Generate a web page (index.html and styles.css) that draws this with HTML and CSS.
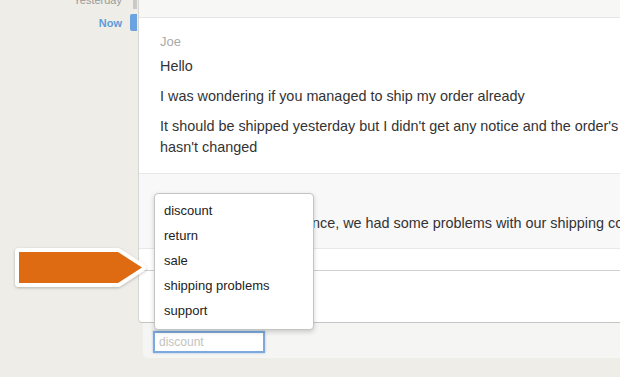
FILE: index.html
```
<!DOCTYPE html>
<html lang="en">
<head>
    <meta charset="UTF-8">
    <meta name="viewport" content="width=device-width, initial-scale=1.0">
    <title>Conversation</title>
    <link rel="stylesheet" href="styles.css">
</head>
<body>

    <div class="app">
        <div class="sidebar">
            <div class="day past">Yesterday</div>
            <div class="day current">Now</div>
        </div>
        <div class="tabs">
            <div class="tab past"></div>
            <div class="tab current"></div>
        </div>

        <div class="main">
            <div class="panel">
                <div class="topbar"></div>

                <div class="message">
                    <div class="author">Joe</div>
                    <p>Hello</p>
                    <p>I was wondering if you managed to ship my order already</p>
                    <p>It should be shipped yesterday but I didn't get any notice and the order's status hasn't changed</p>
                </div>

                <div class="message reply">
                    <div class="author">Anna</div>
                    <p>Sorry for the inconvenience, we had some problems with our shipping company</p>
                </div>

                <div class="strip"></div>
                <div class="compose"></div>
            </div>

            <div class="footer">
                <input class="tag-input" type="text" placeholder="discount">
            </div>
        </div>
    </div>

    <!-- suggestions for the tag field -->
    <ul class="suggestions">
        <li>discount</li>
        <li>return</li>
        <li>sale</li>
        <li>shipping problems</li>
        <li>support</li>
    </ul>

    <!-- callout arrow -->
    <svg class="pointer" width="150" height="56" viewBox="8 240 150 56">
        <defs>
            <filter id="shade" x="-10%" y="-20%" width="120%" height="150%">
                <feDropShadow dx="0" dy="1" stdDeviation="1.5" flood-color="#000" flood-opacity="0.25"/>
            </filter>
        </defs>
        <path d="M19 252 H118 L142 267.5 L118 283 H19 Z" fill="#fff" stroke="#fff" stroke-width="8" stroke-linejoin="round" filter="url(#shade)"/>
        <path d="M19 252 H118 L142 267.5 L118 283 H19 Z" fill="#de6a12"/>
    </svg>

</body>
</html>
```

FILE: styles.css
```
body {
    margin: 0;
    font-family: "Liberation Sans", Arial, sans-serif;
    background-color: #eeede8;
    overflow: hidden;
}

.app {
    display: flex;
    height: 377px;
    width: 740px;
}

.sidebar {
    flex-shrink: 0;
    width: 130px;
    padding-right: 8px;
    box-sizing: border-box;
    text-align: right;
    font-size: 11px;
    margin-top: -7px;
}

.day {
    height: 22px;
    line-height: 14px;
}

.day.past {
    color: #9a9a9a;
}

.day.current {
    color: #5f9bd9;
    font-weight: bold;
    margin-top: 1px;
}

.tabs {
    flex-shrink: 0;
    width: 8px;
    display: flex;
    flex-direction: column;
    align-items: flex-end;
}

.tab.past {
    width: 4px;
    height: 9px;
    background-color: #c9c9c7;
    margin-right: 1px;
}

.tab.current {
    width: 7px;
    height: 17px;
    margin-top: 5px;
    margin-right: 1px;
    background-color: #6ba3e0;
    border-radius: 2px 0 0 2px;
}

.main {
    flex: 1;
    display: flex;
    flex-direction: column;
    min-width: 0;
}

.panel {
    background-color: #fff;
    border-left: 1px solid #d6d6d4;
    border-bottom: 1px solid #c4c4c4;
    border-bottom-left-radius: 4px;
}

.topbar {
    height: 17px;
    background-color: #f7f7f6;
    border-bottom: 1px solid #e6e6e4;
}

.message {
    padding: 15px 60px 15px 21px;
    font-size: 14.4px;
    color: #333;
    border-bottom: 1px solid #e8e8e6;
}

.message.reply {
    background-color: #f8f8f8;
    padding-top: 16px;
    padding-bottom: 14px;
    white-space: nowrap;
    overflow: hidden;
}

.author {
    color: #aaa;
    font-size: 13px;
    line-height: 18px;
    margin-bottom: 5px;
}

.message p {
    margin: 0 0 9px;
    line-height: 21px;
}

.message p:last-child {
    margin-bottom: 0;
}

.strip {
    height: 21px;
    border-bottom: 1px solid #d0d0d0;
}

.compose {
    height: 51px;
}

.footer {
    margin-left: 5px;
    height: 35px;
    background-color: #f5f5f3;
    border-bottom-left-radius: 5px;
    padding: 8px 0 0 10px;
    box-sizing: border-box;
}

.tag-input {
    width: 112px;
    height: 22px;
    box-sizing: border-box;
    border: 2px solid #7ea9dc;
    box-shadow: 0 0 2px rgba(90, 150, 220, 0.6);
    background-color: #fff;
    padding: 0 4px;
    font-family: "Liberation Sans", Arial, sans-serif;
    font-size: 12px;
    outline: none;
}

.tag-input::placeholder {
    color: #c2c2c2;
}

.suggestions {
    position: absolute;
    left: 154px;
    top: 193px;
    width: 160px;
    box-sizing: border-box;
    margin: 0;
    padding: 4px 0 6px;
    list-style: none;
    background-color: #fff;
    border: 1px solid #c4c4c4;
    border-radius: 4px;
    box-shadow: 0 2px 5px rgba(0, 0, 0, 0.18);
    font-size: 13px;
    color: #222;
}

.suggestions li {
    height: 25px;
    line-height: 25px;
    padding-left: 9px;
}

.pointer {
    position: absolute;
    left: 8px;
    top: 240px;
}
```
